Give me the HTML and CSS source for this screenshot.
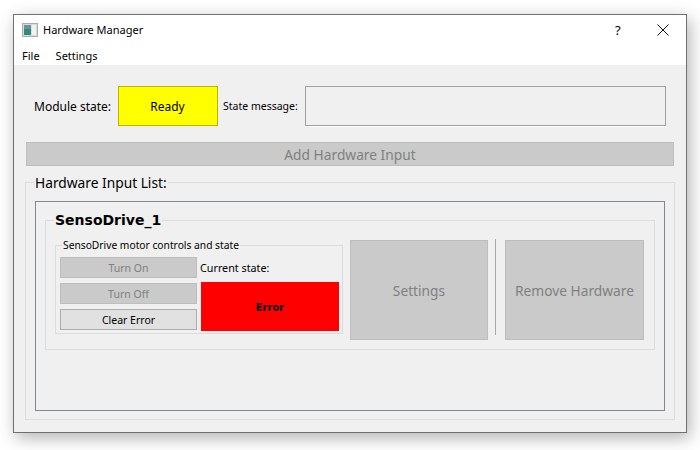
FILE: index.html
```html
<!DOCTYPE html>
<html>

<head>
<title>Hardware Manager</title>
<link rel="stylesheet" href="styles.css">
</head>

<body>
<div class="window">
	<div class="titlebar">
		<svg class="appicon" width="16" height="14" viewBox="0 0 16 14">
			<rect x="0.5" y="0.5" width="15" height="13" fill="#d8dcdc" stroke="#a8acac" />
			<rect x="2" y="2" width="7" height="10" fill="#2f8a78" />
			<rect x="2" y="2" width="7" height="4" fill="#6f8fa0" />
			<rect x="10" y="2" width="4" height="10" fill="#eef2f0" />
		</svg>
		<span class="title">Hardware Manager</span>
		<span class="help">?</span>
		<svg class="close" width="12" height="12" viewBox="0 0 12 12">
			<path d="M0.5 0.5 L11.5 11.5 M11.5 0.5 L0.5 11.5" stroke="#111" fill="none" />
		</svg>
	</div>
	<div class="menubar">
		<span>File</span>
		<span>Settings</span>
	</div>
	<div class="content">
		<div class="staterow">
			<span class="modlabel">Module state:</span>
			<div class="ready">Ready</div>
			<span class="msglabel">State message:</span>
			<div class="msgframe"></div>
		</div>
		<button class="btn addbtn" disabled>Add Hardware Input</button>
		<fieldset class="listgroup">
			<legend>Hardware Input List:</legend>
			<div class="listframe">
				<fieldset class="hwgroup">
					<legend>SensoDrive_1</legend>
					<div class="hwrow">
						<fieldset class="motorgroup">
							<legend>SensoDrive motor controls and state</legend>
							<div class="motorgrid">
								<div class="motorbtns">
									<button class="btn small" disabled>Turn On</button>
									<button class="btn small" disabled>Turn Off</button>
									<button class="btn small active">Clear Error</button>
								</div>
								<div class="motorstate">
									<div class="curlabel">Current state:</div>
									<div class="errorbox">Error</div>
								</div>
							</div>
						</fieldset>
						<button class="btn big" disabled>Settings</button>
						<div class="sep"></div>
						<button class="btn big remove" disabled>Remove Hardware</button>
					</div>
				</fieldset>
			</div>
		</fieldset>
	</div>
</div>
</body>

</html>
```

FILE: styles.css
```css
html, body { margin: 0; padding: 0; background: #fff; }
body { font-family: "Noto Sans", sans-serif; font-size: 11px; color: #000; height: 450px; overflow: hidden; }
button { font-family: inherit; padding: 0; margin: 0; }
fieldset { margin: 0; min-width: 0; }
legend { padding: 0; white-space: nowrap; }

.window { box-sizing: border-box; width: 674px; height: 419px; margin: 14px 0 0 13px; border: 1px solid #707070; background: #f0f0f0; box-shadow: 3px 5px 16px rgba(0, 0, 0, 0.3); }

.titlebar { display: flex; align-items: center; height: 29px; background: #fff; padding-left: 8px; }
.appicon { margin-right: 5px; }
.title { flex: 1; }
.help { width: 10px; margin-right: 32px; font-size: 13px; }
.close { margin-right: 17px; }

.menubar { display: flex; gap: 16px; height: 21px; padding-top: 2px; box-sizing: border-box; align-items: center; background: #fff; padding-left: 8px; }

.content { display: flex; flex-direction: column; padding: 21px 12px 0; }

.staterow { display: flex; align-items: center; height: 40px; padding-left: 8px; }
.modlabel { font-size: 12px; width: 84px; }
.ready { box-sizing: border-box; width: 100px; height: 40px; padding-right: 1px; display: flex; align-items: center; justify-content: center; background: #ff0; border: 1px solid #b8b800; font-size: 12px; }
.msglabel { width: 82px; margin-left: 5px; font-size: 10.5px; }
.msgframe { box-sizing: border-box; width: 361px; height: 40px; border: 1px solid #a0a0a0; box-shadow: 0 1px 0 #fff; }

.btn { display: block; box-sizing: border-box; border: 1px solid #bdbdbd; background: #cacaca; color: #808080; }
.addbtn { width: 648px; height: 24px; margin-top: 16px; font-size: 13.75px; }
.small { width: 137px; height: 21px; font-size: 10.5px; }
.big { width: 138px; height: 100px; margin-top: 1px; font-size: 13.75px; }
.remove { width: 139px; margin-left: 2px; }
.active { background: #e1e1e1; border-color: #adadad; color: #000; }

.listgroup { box-sizing: border-box; width: 650px; height: 246px; margin: 8px 0 0 -1px; padding: 10px 9px 8px; border: 1px solid #dcdcdc; }
.listgroup > legend { margin-left: -1px; padding: 0 1px; font-size: 13.75px; line-height: 17px; }
.listframe { box-sizing: border-box; height: 210px; padding: 9px; border: 1px solid #808890; }

.hwgroup { box-sizing: border-box; height: 139px; padding: 10px 10px 9px 9px; border: 1px solid #dcdcdc; }
.hwgroup > legend { margin-left: -1px; padding: 0 1px; font-family: "DejaVu Sans", sans-serif; font-weight: bold; font-size: 14px; line-height: 18px; }
.hwrow { display: flex; align-items: flex-start; gap: 7px; }

.motorgroup { box-sizing: border-box; width: 288px; height: 95px; padding: 5px 3px 3px 4px; border: 1px solid #dcdcdc; }
.motorgroup > legend { margin-left: 2px; padding: 0 1px; font-size: 10.25px; line-height: 13px; }
.motorgrid { display: flex; gap: 4px; }
.motorbtns { display: flex; flex-direction: column; gap: 5px; }
.curlabel { height: 25px; line-height: 23px; margin-left: -1px; font-size: 10.75px; }
.errorbox { width: 138px; height: 49px; display: flex; align-items: center; justify-content: center; background: #f00; font-family: "DejaVu Sans", sans-serif; font-weight: bold; font-size: 10px; padding-top: 1px; box-sizing: border-box; }

.sep { width: 1px; height: 96px; background: #a8a8a8; }
```
